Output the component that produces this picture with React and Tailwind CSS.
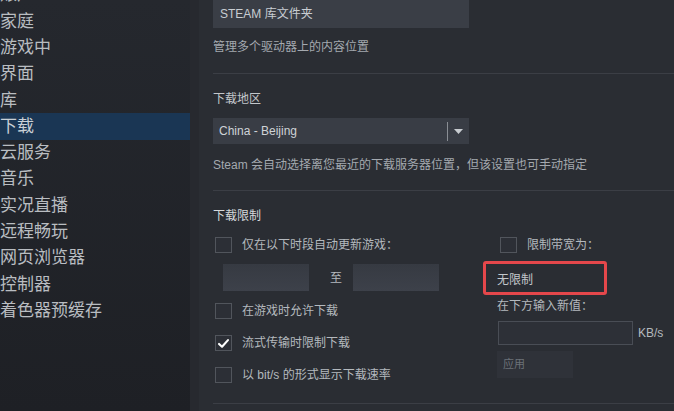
import React from "react";

const font = "font-['Liberation_Sans','Noto_Sans_CJK_SC',sans-serif]";

const navItems = [
  "账户",
  "家庭",
  "游戏中",
  "界面",
  "库",
  "下载",
  "云服务",
  "音乐",
  "实况直播",
  "远程畅玩",
  "网页浏览器",
  "控制器",
  "着色器预缓存",
];

const Checkbox = ({ checked }) => (
  <span className="w-[17px] h-[16px] shrink-0 border border-[#51555c] bg-[#2c2f36] flex items-center justify-center">
    {checked && (
      <svg viewBox="0 0 16 16" className="w-[13px] h-[13px]">
        <path
          d="M2.5 8.5 L6.2 12 L13.5 3.8"
          fill="none"
          stroke="#ffffff"
          strokeWidth="2.6"
          strokeLinecap="round"
          strokeLinejoin="round"
        />
      </svg>
    )}
  </span>
);

const CheckRow = ({ label, checked, className = "" }) => (
  <div className={`flex items-center h-[16px] ml-[2px] gap-[10px] ${className}`}>
    <Checkbox checked={checked} />
    <span className="text-[12px] leading-[16px] text-[#b4b9be]">{label}</span>
  </div>
);

const Divider = ({ className = "" }) => (
  <div className={`h-px bg-[#3b3e45] ${className}`} />
);

export default function App() {
  return (
    <div className={`w-[674px] h-[411px] overflow-hidden flex ${font}`}>
      <aside className="w-[190px] shrink-0 bg-gradient-to-b from-[#25282e] to-[#1e2025] overflow-hidden">
        <ul className="-mt-[18px]">
          {navItems.map((item) => (
            <li
              key={item}
              className={`h-[26.3px] flex items-center text-[17px] text-[#b9bdc1] ${
                item === "下载" ? "bg-[#1a3654] text-[#c9d0d6]" : ""
              }`}
            >
              {item}
            </li>
          ))}
        </ul>
      </aside>
      <div className="w-[9px] shrink-0 bg-[#27292f]" />

      <main className="flex-1 bg-[#2a2d33] pl-[14px] flex flex-col">
        <button className="-mt-[2px] h-[30px] w-[256px] bg-[#3a3e46] text-left pl-[7px] pt-[2px] text-[12px] text-[#c8cdd2]">
          STEAM 库文件夹
        </button>
        <p className="mt-[11px] text-[12px] leading-[16px] text-[#a4a9af]">
          管理多个驱动器上的内容位置
        </p>
        <Divider className="mt-[18px]" />

        <h3 className="mt-[17px] text-[12px] leading-[16px] text-[#c3c7cb]">下载地区</h3>
        <div className="mt-[11px] h-[26px] w-[256px] bg-[#393d45] flex items-center">
          <span className="flex-1 pl-[6px] text-[12px] text-[#cfd3d7]">China - Beijing</span>
          <span className="w-px h-[19px] bg-[#8a8e94]" />
          <span className="w-[21px] flex justify-center">
            <svg viewBox="0 0 9 5" className="w-[9px] h-[5px]">
              <path d="M0 0 H9 L4.5 5 Z" fill="#c8ccd0" />
            </svg>
          </span>
        </div>
        <p className="mt-[13px] text-[12px] leading-[16px] text-[#a4a9af]">
          Steam 会自动选择离您最近的下载服务器位置，但该设置也可手动指定
        </p>
        <Divider className="mt-[17px]" />

        <h3 className="mt-[17px] text-[12px] leading-[16px] text-[#d5d8db]">下载限制</h3>

        <div className="flex">
          <div className="w-[284px] shrink-0">
            <CheckRow className="mt-[13px]" label="仅在以下时段自动更新游戏：" />
            <div className="mt-[11px] flex items-center">
              <div className="ml-[10px] w-[86px] h-[27px] bg-gradient-to-b from-[#363a42] to-[#3d414a]" />
              <span className="ml-[21px] w-[23px] text-[12px] text-[#b4b9be]">至</span>
              <div className="w-[86px] h-[27px] bg-gradient-to-b from-[#363a42] to-[#3d414a]" />
            </div>
            <CheckRow className="mt-[12px]" label="在游戏时允许下载" />
            <CheckRow className="mt-[16px]" label="流式传输时限制下载" checked />
            <CheckRow className="mt-[16px]" label="以 bit/s 的形式显示下载速率" />
          </div>

          <div className="flex-1">
            <div className="mt-[13px] h-[16px] flex items-center gap-[10px] ml-[3px]">
              <Checkbox />
              <span className="text-[12px] text-[#b4b9be]">限制带宽为：</span>
            </div>
            <div className="relative mt-[8px] h-[34px] w-[110px] flex items-center pt-[3px]">
              <span className="text-[12px] text-[#c3c7cb]">无限制</span>
              <span className="absolute -left-[14px] top-0 w-[124px] h-[34px] border-[3px] border-[#e4474b] rounded-[3px]" />
            </div>
            <p className="mt-[3px] text-[12px] leading-[16px] text-[#b4b9be]">在下方输入新值：</p>
            <div className="mt-[7px] flex items-center">
              <div className="ml-px w-[135px] h-[24px] border border-[#494d55] bg-[#2d3037]" />
              <span className="ml-[5px] text-[12px] text-[#b4b9be]">KB/s</span>
            </div>
            <button className="mt-[6px] w-[76px] h-[27px] bg-[#2f3239] text-left pl-[6px] text-[11px] text-[#6c7178]">
              应用
            </button>
          </div>
        </div>

        <Divider className="mt-[20px]" />
      </main>
    </div>
  );
}
